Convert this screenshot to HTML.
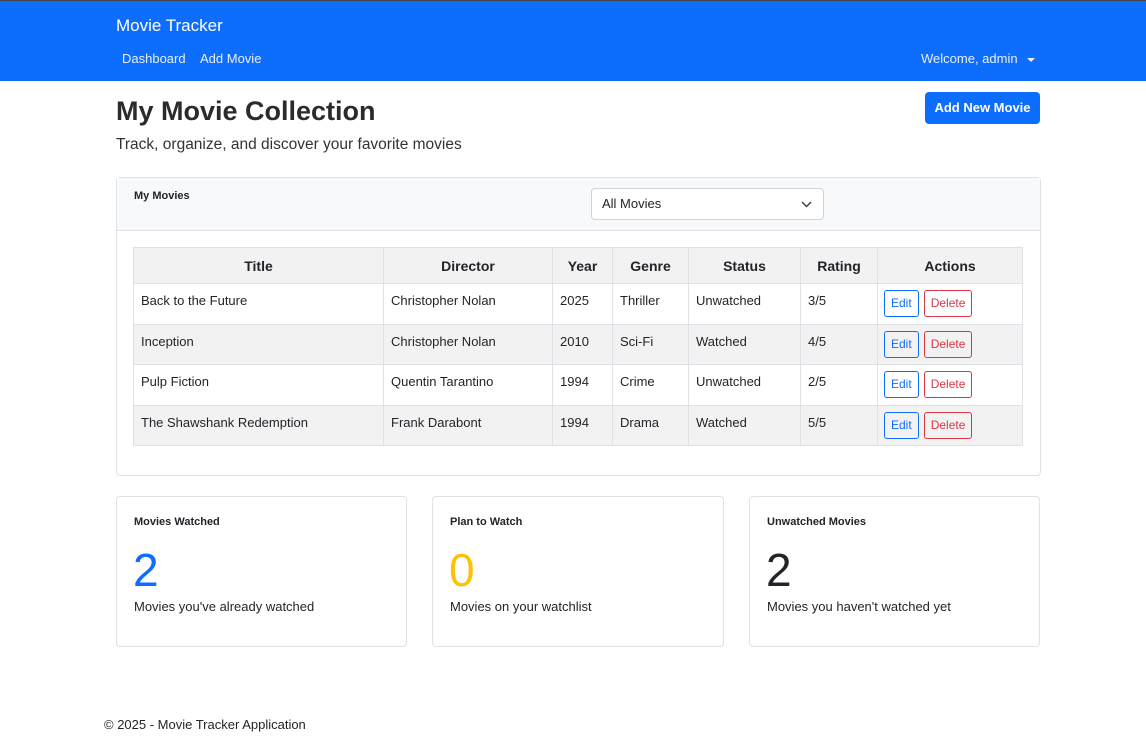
<!DOCTYPE html>
<html><head><style>
*{box-sizing:border-box;margin:0;padding:0}
body{width:1146px;height:750px;background:#fff;font-family:"Liberation Sans",sans-serif;color:#212529;position:relative;overflow:hidden}
.topline{position:absolute;left:0;top:0;width:1146px;height:1px;background:#444}
.nav{position:absolute;left:0;top:1px;width:1146px;height:80px;background:#0d6efd;color:#fff}
.abs{position:absolute;white-space:nowrap}
.card{position:absolute;border:1px solid #dee2e6;border-radius:4px;background:#fff}
table{position:absolute;left:133px;top:247px;border-collapse:collapse;font-size:13px;width:890px}
td,th{border:1px solid #dee2e6;padding:9px 7px 0;text-align:left;height:40.5px;vertical-align:top}
th{text-align:center;background:#f2f2f2;font-size:14px;height:36px;vertical-align:middle;padding:0 7px}
tr.s td{background:#f2f2f2}
td:last-child{padding-top:6px;padding-left:6px}
.btn{display:inline-block;font-size:12px;border:1px solid;border-radius:3px;height:27px;line-height:25px;padding:0 6px;margin-right:5px;vertical-align:top}
.e{color:#0d6efd;border-color:#0d6efd}.d{color:#dc3545;border-color:#dc3545}
.st h6{position:absolute;left:17px;top:19px;font-size:11px;font-weight:bold}
.st .n{position:absolute;left:16px;top:46px;font-size:46px;font-weight:300}
.st p{position:absolute;left:17px;top:102px;font-size:13px}
</style></head><body>
<div class="topline"></div>
<div class="nav">
<div class="abs" style="left:116px;top:15px;font-size:17px">Movie Tracker</div>
<div class="abs" style="left:122px;top:50px;font-size:13px;color:#e8eefc">Dashboard</div>
<div class="abs" style="left:200px;top:50px;font-size:13px;color:#e8eefc">Add Movie</div>
<div class="abs" style="left:921px;top:50px;font-size:13px;color:#e8eefc">Welcome, admin <span style="display:inline-block;margin-left:6px;border-left:4px solid transparent;border-right:4px solid transparent;border-top:4px solid #e8eefc;vertical-align:middle"></span></div>
</div>
<div class="abs" style="left:116px;top:96px;font-size:27px;font-weight:bold;color:#2b2b2b">My Movie Collection</div>
<div class="abs" style="left:116px;top:136px;font-size:15.5px;font-weight:300;color:#333">Track, organize, and discover your favorite movies</div>
<div class="abs" style="left:925px;top:92px;width:115px;height:32px;background:#0d6efd;border-radius:4px;color:#fff;font-size:13px;font-weight:bold;text-align:center;line-height:32px">Add New Movie</div>

<div class="card" style="left:116px;top:177px;width:925px;height:299px">
<div style="height:53px;background:#f8f9fa;border-bottom:1px solid #dee2e6"></div>
<div class="abs" style="left:17px;top:12px;font-size:11px;font-weight:bold">My Movies</div>
<div class="abs" style="left:474px;top:10px;width:233px;height:32px;border:1px solid #ced4da;border-radius:4px;background:#fff;font-size:13px;line-height:30px;padding-left:10px">All Movies
<svg style="position:absolute;right:11px;top:11px" width="11" height="8" viewBox="0 0 11 8"><path d="M1 2l4.5 4.5L10 2" fill="none" stroke="#343a40" stroke-width="1.4"/></svg></div>
</div>
<table>
<tr><th style="width:250px">Title</th><th style="width:169px">Director</th><th style="width:60px">Year</th><th style="width:76px">Genre</th><th style="width:112px">Status</th><th style="width:77px">Rating</th><th>Actions</th></tr>
<tr><td>Back to the Future</td><td>Christopher Nolan</td><td>2025</td><td>Thriller</td><td>Unwatched</td><td>3/5</td><td><span class="btn e">Edit</span><span class="btn d">Delete</span></td></tr>
<tr class="s"><td>Inception</td><td>Christopher Nolan</td><td>2010</td><td>Sci-Fi</td><td>Watched</td><td>4/5</td><td><span class="btn e">Edit</span><span class="btn d">Delete</span></td></tr>
<tr><td>Pulp Fiction</td><td>Quentin Tarantino</td><td>1994</td><td>Crime</td><td>Unwatched</td><td>2/5</td><td><span class="btn e">Edit</span><span class="btn d">Delete</span></td></tr>
<tr class="s"><td>The Shawshank Redemption</td><td>Frank Darabont</td><td>1994</td><td>Drama</td><td>Watched</td><td>5/5</td><td><span class="btn e">Edit</span><span class="btn d">Delete</span></td></tr>
</table>

<div class="card st" style="left:116px;top:496px;width:291px;height:151px"><h6>Movies Watched</h6><div class="n" style="color:#0d6efd">2</div><p>Movies you've already watched</p></div>
<div class="card st" style="left:432px;top:496px;width:292px;height:151px"><h6>Plan to Watch</h6><div class="n" style="color:#ffc107">0</div><p>Movies on your watchlist</p></div>
<div class="card st" style="left:749px;top:496px;width:291px;height:151px"><h6>Unwatched Movies</h6><div class="n" style="color:#212529">2</div><p>Movies you haven't watched yet</p></div>

<div class="abs" style="left:104px;top:717px;font-size:13px">© 2025 - Movie Tracker Application</div>
</body></html>
